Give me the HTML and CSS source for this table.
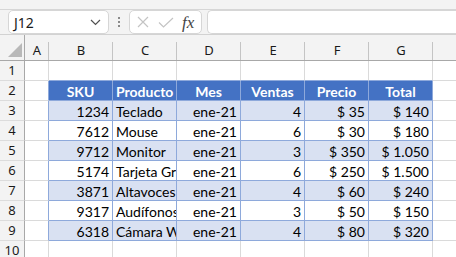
FILE: index.html
```html
<!DOCTYPE html>
<html lang="es">
<head>
<meta charset="utf-8">
<link rel="stylesheet" href="styles.css">
</head>
<body>
<div class="app">
  <div class="topstrip"></div>
  <div class="fbar">
    <div class="namebox">
      <span class="nb-text">J12</span>
      <svg class="chev" width="11" height="7" viewBox="0 0 11 7"><path d="M1 1 L5.5 5.5 L10 1" fill="none" stroke="#505050" stroke-width="1.2"/></svg>
    </div>
    <div class="dots"><i></i><i></i><i></i></div>
    <div class="fxbox">
      <svg class="ico-x" width="12" height="12" viewBox="0 0 12 12"><path d="M1 1 L11 11 M11 1 L1 11" stroke="#c4c4c4" stroke-width="1.2" fill="none"/></svg>
      <svg class="ico-ok" width="16" height="11" viewBox="0 0 16 11"><path d="M1 5.5 L5.5 10 L15 1" stroke="#c4c4c4" stroke-width="1.2" fill="none"/></svg>
      <span class="fx">fx</span>
    </div>
    <div class="finput"></div>
  </div>
  <div class="sheet">
    <div class="corner"><svg width="14" height="14" viewBox="0 0 14 14"><polygon points="14,0 14,14 0,14" fill="#b8b8b8"/></svg></div>
    <div class="ch">A</div><div class="ch">B</div><div class="ch">C</div><div class="ch">D</div><div class="ch">E</div><div class="ch">F</div><div class="ch">G</div><div class="ch"></div>

    <div class="rh">1</div>
    <div class="c"></div><div class="c tt"></div><div class="c tt"></div><div class="c tt"></div><div class="c tt"></div><div class="c tt"></div><div class="c tt"></div><div class="c"></div>

    <div class="rh">2</div>
    <div class="c tl"></div>
    <div class="c t hd">SKU</div><div class="c t hd">Producto</div><div class="c t hd">Mes</div><div class="c t hd">Ventas</div><div class="c t hd">Precio</div><div class="c t hd">Total</div>
    <div class="c"></div>

    <div class="rh">3</div>
    <div class="c tl"></div>
    <div class="c t band r">1234</div><div class="c t band l">Teclado</div><div class="c t band r">ene-21</div><div class="c t band r">4</div><div class="c t band r">$ 35</div><div class="c t band r">$ 140</div>
    <div class="c"></div>

    <div class="rh">4</div>
    <div class="c tl"></div>
    <div class="c t r">7612</div><div class="c t l">Mouse</div><div class="c t r">ene-21</div><div class="c t r">6</div><div class="c t r">$ 30</div><div class="c t r">$ 180</div>
    <div class="c"></div>

    <div class="rh">5</div>
    <div class="c tl"></div>
    <div class="c t band r">9712</div><div class="c t band l">Monitor</div><div class="c t band r">ene-21</div><div class="c t band r">3</div><div class="c t band r">$ 350</div><div class="c t band r">$ 1.050</div>
    <div class="c"></div>

    <div class="rh">6</div>
    <div class="c tl"></div>
    <div class="c t r">5174</div><div class="c t l">Tarjeta Gráfica</div><div class="c t r">ene-21</div><div class="c t r">6</div><div class="c t r">$ 250</div><div class="c t r">$ 1.500</div>
    <div class="c"></div>

    <div class="rh">7</div>
    <div class="c tl"></div>
    <div class="c t band r">3871</div><div class="c t band l">Altavoces</div><div class="c t band r">ene-21</div><div class="c t band r">4</div><div class="c t band r">$ 60</div><div class="c t band r">$ 240</div>
    <div class="c"></div>

    <div class="rh">8</div>
    <div class="c tl"></div>
    <div class="c t r">9317</div><div class="c t l">Audífonos</div><div class="c t r">ene-21</div><div class="c t r">3</div><div class="c t r">$ 50</div><div class="c t r">$ 150</div>
    <div class="c"></div>

    <div class="rh">9</div>
    <div class="c tl"></div>
    <div class="c t band r">6318</div><div class="c t band l">Cámara Web</div><div class="c t band r">ene-21</div><div class="c t band r">4</div><div class="c t band r">$ 80</div><div class="c t band r">$ 320</div>
    <div class="c"></div>

    <div class="rh">10</div>
    <div class="c"></div><div class="c"></div><div class="c"></div><div class="c"></div><div class="c"></div><div class="c"></div><div class="c"></div><div class="c"></div>
  </div>
</div>
</body>
</html>
```

FILE: styles.css
```css
html, body {
  margin: 0;
  padding: 0;
  background: #ffffff;
}
.app {
  width: 456px;
  height: 257px;
  overflow: hidden;
  background: #f3f3f3;
}
.topstrip {
  height: 9px;
  background: #f3f3f3;
  border-bottom: 1px solid #d6d6d6;
}
.fbar {
  height: 24px;
  display: flex;
  align-items: stretch;
  padding-left: 8px;
  background: #f3f3f3;
  border-bottom: 1px solid #d2d2d2;
}
.namebox {
  width: 101px;
  box-sizing: border-box;
  background: #fff;
  border: 1px solid #d6d6d6;
  border-radius: 5px;
  display: flex;
  align-items: center;
  justify-content: space-between;
  padding: 0 7px 0 5px;
}
.nb-text {
  font-family: "Noto Sans", "DejaVu Sans", sans-serif;
  font-size: 14px;
  color: #1a1a1a;
}
.chev { display: block; }
.dots {
  width: 20px;
  display: flex;
  flex-direction: column;
  align-items: center;
  justify-content: center;
  gap: 2px;
}
.dots i {
  display: block;
  width: 2px;
  height: 2px;
  background: #8a8a8a;
}
.fxbox {
  width: 73px;
  box-sizing: border-box;
  background: #fff;
  border: 1px solid #d6d6d6;
  border-radius: 5px;
  display: flex;
  align-items: center;
  padding-left: 7px;
}
.ico-x { margin-right: 9px; }
.ico-ok { margin-right: 8px; }
.fx {
  font-family: "Liberation Serif", "DejaVu Serif", serif;
  font-style: italic;
  font-size: 17px;
  color: #444;
  line-height: 1;
}
.finput {
  flex: 1;
  margin-left: 5px;
  background: #fff;
  border: 1px solid #d6d6d6;
  border-right: none;
  border-radius: 5px 0 0 5px;
}
.sheet {
  display: grid;
  grid-template-columns: 25px 24px repeat(6, 64px) 64px;
  grid-template-rows: 26px repeat(10, 20px);
  background: #fff;
  font-family: "Lato", "Liberation Sans", sans-serif;
  font-size: 14px;
  color: #000;
}
.corner {
  box-sizing: border-box;
  background: #f3f3f3;
  border-right: 1px solid #a8a8a8;
  border-bottom: 1px solid #a8a8a8;
  display: flex;
  align-items: flex-end;
  justify-content: flex-end;
  padding: 0 2px 3px 0;
}
.corner svg { display: block; }
.ch {
  position: relative;
  box-sizing: border-box;
  background: #f3f3f3;
  border-bottom: 1px solid #a8a8a8;
  font-family: "Noto Sans", "DejaVu Sans", sans-serif;
  font-size: 13px;
  color: #1a1a1a;
  text-align: center;
  line-height: 19px;
  padding-top: 6px;
}
.ch::after {
  content: "";
  position: absolute;
  right: 0;
  top: 7px;
  bottom: 0;
  width: 1px;
  background: #c4c4c4;
}
.rh {
  box-sizing: border-box;
  background: #f3f3f3;
  border-right: 1px solid #a8a8a8;
  border-bottom: 1px solid #dcdcdc;
  font-family: "Noto Sans", "DejaVu Sans", sans-serif;
  font-size: 13px;
  color: #1a1a1a;
  text-align: center;
  line-height: 19px;
}
.c {
  box-sizing: border-box;
  border-right: 1px solid #dadada;
  border-bottom: 1px solid #dadada;
  white-space: nowrap;
  overflow: hidden;
  line-height: 19px;
  padding: 1px 3px 0 3px;
}
.tt { border-bottom-color: #8ea9db; }
.tl { border-right-color: #8ea9db; }
.t {
  border-right-color: #8ea9db;
  border-bottom-color: #8ea9db;
}
.hd {
  background: #4472c4;
  color: #fff;
  font-weight: bold;
  text-align: center;
}
.band { background: #d9e1f2; }
.r { text-align: right; }
.l { text-align: left; padding-left: 3px; padding-right: 0; }
```
